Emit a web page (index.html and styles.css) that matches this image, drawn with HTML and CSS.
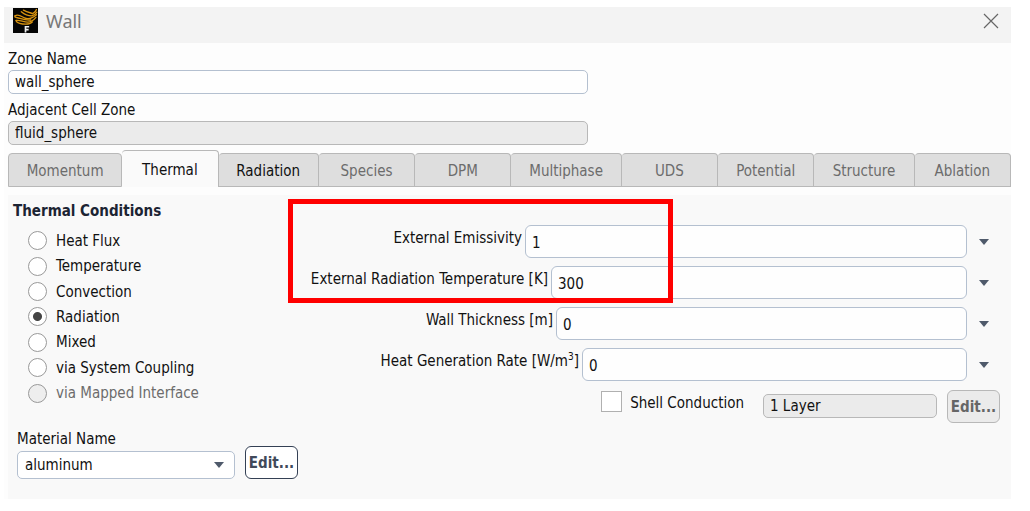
FILE: index.html
```html
<!DOCTYPE html>
<html lang="en">
<head>
<meta charset="utf-8">
<title>Wall</title>
<link rel="stylesheet" href="styles.css">
</head>
<body>
<main class="dialog">
  <header class="titlebar">
    <svg class="logo" viewBox="0 0 24 24" aria-hidden="true">
      <rect width="24" height="24" fill="#050505"/>
      <g fill="none" stroke="#d8930f" stroke-width="1.300" stroke-linecap="round">
        <path d="M10 2C14 4 18 5 19 5.500C21 4.500 22 3 22.500 1.500"/>
        <path d="M8 3.500C11 6 15 7.500 18 7.500C20.500 7 22 5.500 22.800 4"/>
        <path d="M2 7.500C5 5.500 8 8 11 9.500S18 10.500 22.500 6.500"/>
        <path d="M2 7.500C1 9 4 9.500 6 9.800C10 11 13 12 17 11.500"/>
        <path d="M3 12C6 11 10 13.500 14 13.500S20 11.500 22 9"/>
        <path d="M3 12C3 14.500 9 15.500 12 15.500S17 15 18.500 13.500"/>
      </g>
      <path d="M12 23.500V18H15.500M12 20.800H15" fill="none" stroke="#eee" stroke-width="1.600"/>
    </svg>
    <h1 class="title">Wall</h1>
    <button class="close" type="button" aria-label="Close">
      <svg viewBox="0 0 16 16" aria-hidden="true"><path d="M1 1L15 15M15 1L1 15" fill="none" stroke="#666" stroke-width="1.200"/></svg>
    </button>
  </header>

  <div class="body">
    <div class="zone">
      <label for="zone">Zone Name</label>
      <input class="field" id="zone" type="text" value="wall_sphere">
      <label for="adjacent">Adjacent Cell Zone</label>
      <input class="field locked" id="adjacent" type="text" value="fluid_sphere" readonly>
    </div>

    <div class="tabs" role="tablist">
      <button class="tab wide" role="tab" type="button" disabled>Momentum</button>
      <button class="tab active" role="tab" type="button" aria-selected="true">Thermal</button>
      <button class="tab medium" role="tab" type="button">Radiation</button>
      <button class="tab" role="tab" type="button" disabled>Species</button>
      <button class="tab" role="tab" type="button" disabled>DPM</button>
      <button class="tab large" role="tab" type="button" disabled>Multiphase</button>
      <button class="tab" role="tab" type="button" disabled>UDS</button>
      <button class="tab" role="tab" type="button" disabled>Potential</button>
      <button class="tab medium" role="tab" type="button" disabled>Structure</button>
      <button class="tab" role="tab" type="button" disabled>Ablation</button>
    </div>

    <section class="panel">
      <div class="left">
        <fieldset class="conditions">
          <legend>Thermal Conditions</legend>
          <div class="options">
            <label><input type="radio" name="cond">Heat Flux</label>
            <label><input type="radio" name="cond">Temperature</label>
            <label><input type="radio" name="cond">Convection</label>
            <label><input type="radio" name="cond" checked>Radiation</label>
            <label><input type="radio" name="cond">Mixed</label>
            <label><input type="radio" name="cond">via System Coupling</label>
            <label class="dim"><input type="radio" name="cond" disabled>via Mapped Interface</label>
          </div>
        </fieldset>
        <div class="material">
          <div class="material-pick">
            <label for="material">Material Name</label>
            <select class="select" id="material"><option>aluminum</option></select>
          </div>
          <button class="edit" type="button">Edit...</button>
        </div>
      </div>

      <div class="right">
        <div class="row emissivity">
          <label for="emissivity">External Emissivity</label>
          <input class="value" id="emissivity" type="text" value="1">
          <button class="more" type="button" aria-label="Emissivity options"></button>
        </div>
        <div class="row temperature">
          <label for="temperature">External Radiation Temperature [K]</label>
          <input class="value" id="temperature" type="text" value="300">
          <button class="more" type="button" aria-label="Temperature options"></button>
        </div>
        <div class="row thickness">
          <label for="thickness">Wall Thickness [m]</label>
          <input class="value" id="thickness" type="text" value="0">
          <button class="more" type="button" aria-label="Thickness options"></button>
        </div>
        <div class="row generation">
          <label for="generation">Heat Generation Rate [W/m<sup>3</sup>]</label>
          <input class="value" id="generation" type="text" value="0">
          <button class="more" type="button" aria-label="Heat generation options"></button>
        </div>
        <div class="shell">
          <label class="check"><input type="checkbox">Shell Conduction</label>
          <input class="field locked layers" type="text" value="1 Layer" aria-label="Layers" readonly>
          <button class="edit" type="button" disabled>Edit...</button>
        </div>
        <div class="highlight"></div>
      </div>
    </section>
  </div>
</main>
</body>
</html>
```

FILE: styles.css
```css
* { box-sizing: border-box; }

body {
  margin: 0;
  background: #fff;
  color: #111;
  font: 15px/20px "DejaVu Sans Condensed", "Noto Sans", sans-serif;
}

button, input, select { font: inherit; color: inherit; margin: 0; }

.dialog { margin: 7px 19px 0 4px; background: #fdfdfd; }

.titlebar {
  display: flex;
  align-items: flex-start;
  gap: 8px;
  height: 36px;
  padding: 1px 12px 0 9px;
  background: #f3f3f3;
}
.logo { width: 25px; height: 25px; }
.title {
  flex: 1;
  margin: 0;
  color: #777;
  font: 18px/26px "Noto Sans", sans-serif;
}
.close { width: 16px; height: 16px; margin-top: 5px; padding: 0; border: 0; background: none; }
.close svg { display: block; }

.body { padding: 6px 0 0 4px; }

.zone { display: flex; flex-direction: column; width: 58%; max-width: 580px; }
.zone label { line-height: 20px; }
.zone .field { margin: 1px 0 6px; }
.zone .locked { margin-bottom: 5px; }

.field {
  width: 100%;
  height: 24px;
  padding: 0 6px;
  border: 1px solid #b4c0d0;
  border-radius: 5px;
  background: #fefefe;
}
.locked { border-color: #b8b8b8; background: #ebebeb; }

.tabs { display: flex; align-items: flex-end; }
.tab {
  flex: 96 1 0;
  height: 34px;
  padding: 2px 0 0;
  border: 1px solid #b8b8b8;
  border-left-width: 0;
  border-radius: 4px 4px 0 0;
  background: #dedede;
  color: #111;
}
.tab:first-child { border-left-width: 1px; }
.tab:disabled { color: #6c6c6c; }
.wide { flex-grow: 113; }
.medium { flex-grow: 100; }
.large { flex-grow: 110; }
.active { height: 37px; border-bottom: 0; background: #fafafa; }

.panel {
  display: grid;
  grid-template-columns: 280px 1fr;
  margin-top: 8px;
  min-height: 304px;
  background: #f9f9f9;
}

.conditions { margin: 0; padding: 0; border: 0; }
.conditions legend { padding: 6px 0 0 5px; font-weight: bold; color: #1c2433; }
.options { display: grid; grid-auto-rows: 1fr; height: 178px; margin: 7px 0 0 20px; }
.options label { display: flex; align-items: center; gap: 9px; }
.dim { color: #6c6c6c; }

input[type="radio"] {
  appearance: none;
  width: 19px;
  height: 19px;
  border: 1px solid #999;
  border-radius: 50%;
  background: #fff;
}
input[type="radio"]:checked { background: radial-gradient(circle, #444 0 4px, #fff 5px); }
input[type="radio"]:disabled { background: #eee; }

.material { display: flex; align-items: flex-end; gap: 10px; margin: 23px 0 0 9px; }
.material-pick { display: flex; flex-direction: column; width: 218px; gap: 2px; }
.select {
  appearance: none;
  height: 28px;
  padding: 0 7px;
  border: 1px solid #b4c0d0;
  border-radius: 5px;
  background: #fff url("data:image/svg+xml,%3Csvg xmlns='http://www.w3.org/2000/svg' viewBox='0 0 10 6'%3E%3Cpath d='M0 0h10L5 6z' fill='%234f5a6b'/%3E%3C/svg%3E") no-repeat right 10px center / 10px 6px;
}

.material-pick, .edit { flex-shrink: 0; }
.edit {
  width: 53px;
  height: 33px;
  padding: 0;
  border: 1px solid #344054;
  border-radius: 6px;
  background: #fff;
  color: #414a5a;
  font-weight: bold;
}
.edit:disabled { border-color: #b8b8b8; background: #ebebeb; color: #666; }

.right { position: relative; display: flex; flex-direction: column; gap: 8px; padding-top: 30px; }
.row { display: grid; grid-template-columns: 237px 1fr 44px; height: 33px; }
.row label { padding: 3px 3px 0 0; text-align: right; white-space: nowrap; }
.row sup { font-size: 10px; line-height: 0; }
.temperature { grid-template-columns: 263px 1fr 44px; }
.thickness { grid-template-columns: 268px 1fr 44px; }
.generation { grid-template-columns: 294px 1fr 44px; }
.value {
  min-width: 0;
  padding: 2px 6px 0;
  border: 1px solid #b4c0d0;
  border-radius: 6px;
  background: #fefefe;
}
.more { display: flex; align-items: center; padding: 0 12px; border: 0; background: none; }
.more::before { content: ""; border: 5px solid transparent; border-top: 6px solid #4f5a6b; border-bottom: 0; }

.shell { display: flex; justify-content: flex-end; padding-right: 11px; }
.shell .edit { margin-left: 10px; margin-top: 1px; }
.check { display: flex; gap: 8px; margin: 2px 19px 0 0; line-height: 24px; white-space: nowrap; }
.check input { appearance: none; width: 21px; height: 21px; border: 1px solid #b0b0b0; background: #fff; }
.layers { width: 174px; margin-top: 5px; }

.highlight {
  position: absolute;
  top: 4px;
  left: 0;
  width: 385px;
  height: 104px;
  border: 5px solid #f00;
  pointer-events: none;
}
```
